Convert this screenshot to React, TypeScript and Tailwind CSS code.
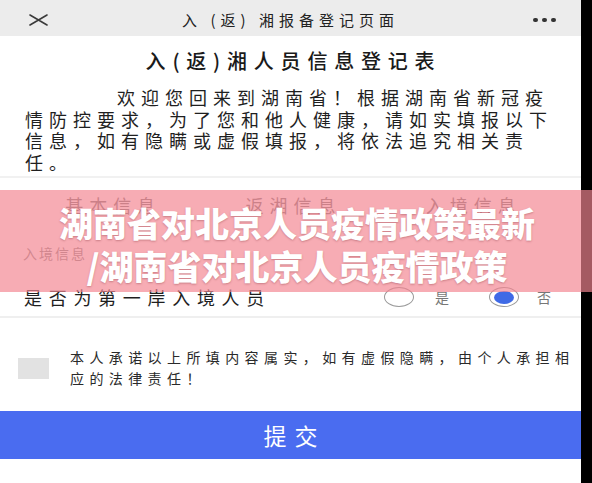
const cjk = "font-['Noto_Sans_CJK_SC','Noto_Sans_CJK_JP',sans-serif]";

function Radio({ checked }: { checked?: boolean }) {
  return (
    <span className="flex h-[20px] w-[30px] items-center justify-center rounded-[50%] border-[1.5px] border-[#9a9a9a]">
      {checked && <span className="h-[13px] w-[20px] rounded-[50%] bg-[#3f6ae6]" />}
    </span>
  );
}

export default function App() {
  return (
    <div className={`relative flex h-[483px] w-[592px] overflow-hidden bg-black ${cjk}`}>
      <div className="flex w-[581px] flex-col bg-white">
        <header className="flex h-[36px] shrink-0 items-center bg-[#ececec] pl-[29px] pr-[25px] pt-[4px]">
          <svg width="19" height="12" viewBox="0 0 19 12" className="shrink-0">
            <path d="M1 1L18 11M18 1L1 11" stroke="#3a3a3a" strokeWidth="1.6" strokeLinecap="round" />
          </svg>
          <h2 className="flex-1 text-center text-[15px] leading-[20px] tracking-[5px] text-[#222]">
            入 (返) 湘报备登记页面
          </h2>
          <div className="flex gap-[4px]">
            <span className="h-[4px] w-[5px] rounded-full bg-[#333]" />
            <span className="h-[4px] w-[5px] rounded-full bg-[#333]" />
            <span className="h-[4px] w-[5px] rounded-full bg-[#333]" />
          </div>
        </header>

        <section className="border-b-2 border-[#f1f1f1] pb-[3px]">
          <h1 className="mt-[12px] pl-[6px] text-center text-[20px] font-medium leading-[26px] tracking-[6.8px] text-[#1a1a1a]">
            入(返)湘人员信息登记表
          </h1>
          <div className="mt-[13px] px-[25px] text-[18px] leading-[21.5px] tracking-[6px] text-[#1f1f1f]">
            <p className="pl-[92px]">欢迎您回来到湖南省！根据湖南省新冠疫</p>
            <p>情防控要求，为了您和他人健康，请如实填报以下</p>
            <p>信息，如有隐瞒或虚假填报，将依法追究相关责</p>
            <p>任。</p>
          </div>
        </section>

        <nav className="mt-[16px] grid grid-cols-3 px-[20px] text-center text-[18px] leading-[22px] tracking-[6px] text-[#777]">
          <span className="pl-[6px]">基本信息</span>
          <span className="pl-[6px]">返湘信息</span>
          <span className="pl-[6px]">入境信息</span>
        </nav>

        <p className="mt-[28px] pl-[23px] text-[14px] leading-[18px] tracking-[2px] text-[#8a8a8a]">入境信息</p>

        <div className="mt-[18px] flex h-[38px] items-center border-b-2 border-[#efefef] pb-[2px] pl-[24px]">
          <span className="text-[18px] leading-[22px] tracking-[6.7px] text-[#1f1f1f]">是否为第一岸入境人员</span>
          <div className="ml-auto flex items-center pr-[30px]">
            <Radio />
            <span className="ml-[21px] text-[14px] text-[#777]">是</span>
            <span className="ml-[40px]">
              <Radio checked />
            </span>
            <span className="ml-[18px] text-[14px] text-[#777]">否</span>
          </div>
        </div>

        <div className="mt-[29px] flex items-center pl-[18px]">
          <span className="h-[21px] w-[31px] shrink-0 bg-[#e2e2e2]" />
          <div className="ml-[21px] text-[14px] leading-[21px] tracking-[5.4px] text-[#2a2a2a]">
            <p>本人承诺以上所填内容属实，如有虚假隐瞒，由个人承担相</p>
            <p>应的法律责任！</p>
          </div>
        </div>

        <button className="mt-[22px] flex h-[48px] items-center justify-center bg-[#4a6cf0] pl-[8px] text-[23px] tracking-[8px] text-white">
          提交
        </button>
      </div>

      <div className="absolute inset-x-0 top-[190px] flex h-[102px] flex-col items-center justify-center bg-[rgba(243,132,144,0.68)] pl-[2px] pt-[6px] text-[34px] font-black leading-[43px] text-white [text-shadow:0_1px_2px_rgba(120,40,50,0.35)]">
        <p>湖南省对北京人员疫情政策最新</p>
        <p>/湖南省对北京人员疫情政策</p>
      </div>
    </div>
  );
}
